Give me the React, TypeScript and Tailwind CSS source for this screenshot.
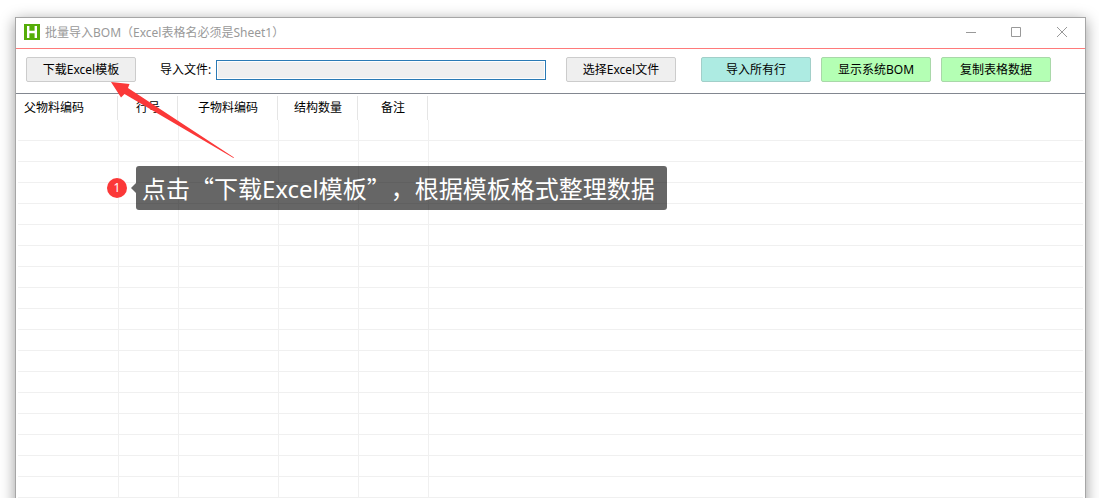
import { Fragment } from 'react';
import clsx from 'clsx';

type Align = 'left' | 'center';

interface Column {
  key: string;
  title: string;
  width: string;
  align: Align;
}

const COLUMNS: Column[] = [
  { key: 'parent', title: '父物料编码', width: 'w-[101px]', align: 'left' },
  { key: 'line', title: '行号', width: 'w-[60px]', align: 'center' },
  { key: 'child', title: '子物料编码', width: 'w-[100px]', align: 'center' },
  { key: 'qty', title: '结构数量', width: 'w-[80px]', align: 'center' },
  { key: 'remark', title: '备注', width: 'w-[70px]', align: 'center' },
];

const ROWS = Array.from({ length: 20 }, (_, i) => i);

const BUTTON_COLORS = {
  gray: 'border-[#cccccc] bg-[#efefef]',
  cyan: 'border-[#a2cfc9] bg-[#adebe2]',
  green: 'border-[#a9d8a9] bg-[#b4ffb4]',
};

const ToolButton = ({
  label,
  color = 'gray',
}: {
  label: string;
  color?: keyof typeof BUTTON_COLORS;
}) => (
  <button
    type="button"
    className={clsx(
      'flex h-[25px] w-[110px] shrink-0 items-center justify-center rounded-[2px] border',
      BUTTON_COLORS[color]
    )}
  >
    {label}
  </button>
);

const TitleBar = () => (
  <header className="flex h-[31px] items-start border-b border-[#ff7a7a] pl-2">
    <svg className="mt-[6px] h-4 w-4 shrink-0" viewBox="0 0 16 16" aria-hidden="true">
      <rect width="16" height="16" fill="#55ad08" />
      <path d="M4.2 2v12M11.8 2v12M4 8h8" fill="none" stroke="#fff" strokeWidth="2.4" />
    </svg>
    <h1 className="ml-[5px] flex-1 leading-[30px] whitespace-nowrap text-[#999999]">
      批量导入BOM（Excel表格名必须是Sheet1）
    </h1>
    <div className="flex h-[29px] text-[#999999]">
      <button type="button" aria-label="最小化" className="flex w-[45px] items-center justify-center">
        <svg className="h-[11px] w-[11px]" viewBox="0 0 11 11">
          <path d="M0 5.5h10" stroke="currentColor" />
        </svg>
      </button>
      <button type="button" aria-label="最大化" className="flex w-[45px] items-center justify-center">
        <svg className="h-[11px] w-[11px]" viewBox="0 0 11 11">
          <path d="M.5 .5h9v9h-9z" fill="none" stroke="currentColor" />
        </svg>
      </button>
      <button type="button" aria-label="关闭" className="flex w-[46px] items-center justify-center">
        <svg className="h-[11px] w-[11px]" viewBox="0 0 11 11">
          <path d="M0 0l10 10M10 0l-10 10" stroke="currentColor" />
        </svg>
      </button>
    </div>
  </header>
);

const Toolbar = () => (
  <div className="flex items-center border-b border-[#828790] pt-2 pb-[11px] pl-[10px]">
    <ToolButton label="下载Excel模板" />
    <label htmlFor="file" className="ml-6 w-[56px] shrink-0 whitespace-nowrap">
      导入文件:
    </label>
    <input
      id="file"
      type="text"
      readOnly
      className="h-5 w-[330px] border border-[#2a7ab5] bg-[#efefef] px-1 shadow-[inset_0_0_0_1px_#fff] outline-none"
    />
    <div className="ml-5">
      <ToolButton label="选择Excel文件" />
    </div>
    <div className="ml-[25px] flex gap-[10px]">
      <ToolButton label="导入所有行" color="cyan" />
      <ToolButton label="显示系统BOM" color="green" />
      <ToolButton label="复制表格数据" color="green" />
    </div>
  </div>
);

const BomTable = () => (
  <div className="px-[2px] pt-[2px]">
    <table className="w-full table-fixed border-separate border-spacing-0">
      <thead>
        <tr>
          {COLUMNS.map((col) => (
            <th key={col.key} className={clsx('p-0 pr-px font-normal', col.width)}>
              <div
                className={clsx(
                  'h-6 border-r border-[#e5e5e5] leading-6 whitespace-nowrap',
                  col.align === 'left' ? 'pl-[6px] text-left' : 'text-center'
                )}
              >
                {col.title}
              </div>
            </th>
          ))}
          <th className="p-0" />
        </tr>
      </thead>
      <tbody>
        {ROWS.map((row) => (
          <tr key={row} className="h-[21px]">
            {COLUMNS.map((col) => (
              <td key={col.key} className="border-r border-b border-[#f0f0f0] p-0" />
            ))}
            <td className="border-b border-[#f0f0f0] p-0" />
          </tr>
        ))}
      </tbody>
    </table>
  </div>
);

// quotes are set in the CJK font so they take a full character width
const TIP_PARTS = [
  { text: '点击', cjk: false },
  { text: '“', cjk: true },
  { text: '下载Excel模板', cjk: false },
  { text: '”', cjk: true },
  { text: '，根据模板格式整理数据', cjk: false },
];

const GuideTip = () => (
  <>
    <svg
      className="pointer-events-none absolute top-[80px] left-[108px] h-[80px] w-[130px]"
      viewBox="108 80 130 80"
      aria-hidden="true"
    >
      <path d="M111 82L129.5 84L128 88L234 157.5L233.5 158L124.5 94L121 97.5Z" fill="#fb3838" />
    </svg>
    <div className="absolute top-[166px] left-[107px] flex items-center text-white">
      <span className="flex h-5 w-5 items-center justify-center rounded-full bg-[#fb3838]">
        1
      </span>
      <svg className="ml-1 h-[10px] w-[5px]" viewBox="0 0 5 10" aria-hidden="true">
        <path d="M5 0L0 5L5 10Z" fill="#000" fillOpacity="0.6" />
      </svg>
      <p className="h-11 rounded-[3px] bg-black/60 pr-3 pl-[6px] text-2xl leading-[44px] whitespace-nowrap [text-spacing-trim:space-all]">
        {TIP_PARTS.map((part) =>
          part.cjk ? (
            <span key={part.text} className="font-['Noto_Sans_CJK_SC',sans-serif]">
              {part.text}
            </span>
          ) : (
            <Fragment key={part.text}>{part.text}</Fragment>
          )
        )}
      </p>
    </div>
  </>
);

export default function App() {
  return (
    <div
      lang="zh-CN"
      className="relative h-screen overflow-hidden bg-white pt-[17px] pr-[13px] pl-[15px] font-['Noto_Sans','Noto_Sans_CJK_SC',sans-serif] text-xs text-black"
    >
      <main className="border border-[#a6a6a6] bg-white shadow-[0_3px_14px_rgba(0,0,0,0.4)]">
        <TitleBar />
        <Toolbar />
        <BomTable />
      </main>
      <GuideTip />
    </div>
  );
}
